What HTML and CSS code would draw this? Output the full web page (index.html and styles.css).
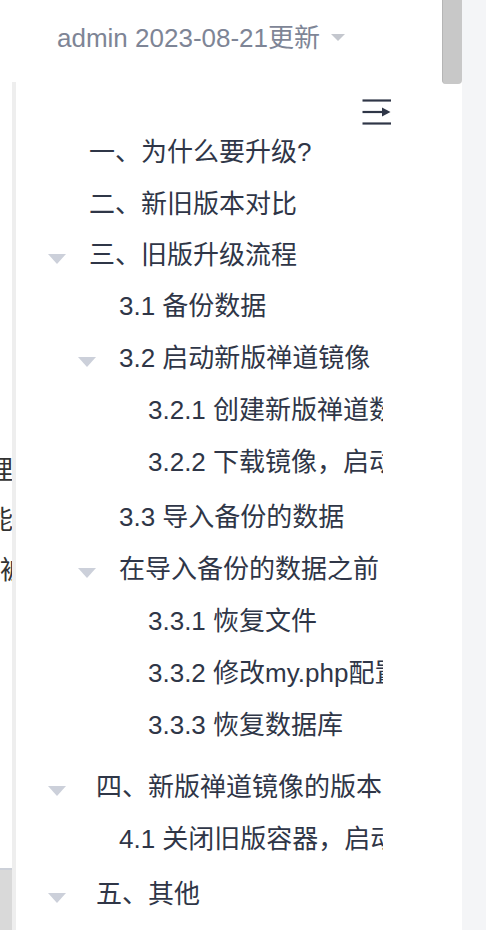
FILE: index.html
```html
<!DOCTYPE html>
<html lang="zh-CN">
<head>
<meta charset="utf-8">
<title>目录</title>
<link rel="stylesheet" href="styles.css">
</head>
<body>
<div class="window">
  <div class="main">
    <header class="meta"><span class="meta-text">admin 2023-08-21更新</span><span class="meta-caret"></span></header>
    <div class="body-row">
      <div class="page-col">
        <div class="page-line shift">理</div>
        <div class="page-line shift">能</div>
        <div class="page-line">被</div>
        <div class="page-block"></div>
      </div>
      <aside class="toc">
        <div class="toc-head">
          <svg class="toc-icon" width="30" height="26" viewBox="0 0 30 26">
            <line x1="0.5" y1="1.5" x2="29" y2="1.5"/>
            <line x1="0.5" y1="13" x2="22" y2="13"/>
            <path class="head" d="M20 8.5 L28.5 13 L20 17.5 Z"/>
            <line x1="0.5" y1="24.5" x2="29" y2="24.5"/>
          </svg>
        </div>
        <ul class="toc-list">
          <li class="row l1"><span class="slot"></span><span class="label">一、为什么要升级?</span></li>
          <li class="row l1"><span class="slot"></span><span class="label">二、新旧版本对比</span></li>
          <li class="row l1 tight"><span class="slot"><span class="caret"></span></span><span class="label">三、旧版升级流程</span></li>
          <li class="row l2"><span class="slot"></span><span class="label">3.1 备份数据</span></li>
          <li class="row l2"><span class="slot"><span class="caret"></span></span><span class="label">3.2 启动新版禅道镜像</span></li>
          <li class="row l3"><span class="slot"></span><span class="label">3.2.1 创建新版禅道数据目录</span></li>
          <li class="row l3"><span class="slot"></span><span class="label">3.2.2 下载镜像，启动容器</span></li>
          <li class="row l2 gap-s"><span class="slot"></span><span class="label">3.3 导入备份的数据</span></li>
          <li class="row l2"><span class="slot"><span class="caret"></span></span><span class="label">在导入备份的数据之前</span></li>
          <li class="row l3"><span class="slot"></span><span class="label">3.3.1 恢复文件</span></li>
          <li class="row l3"><span class="slot"></span><span class="label">3.3.2 修改my.php配置文件</span></li>
          <li class="row l3"><span class="slot"></span><span class="label">3.3.3 恢复数据库</span></li>
          <li class="row l1 wide gap-l"><span class="slot"><span class="caret"></span></span><span class="label">四、新版禅道镜像的版本</span></li>
          <li class="row l2"><span class="slot"></span><span class="label">4.1 关闭旧版容器，启动新版容器</span></li>
          <li class="row l1 wide gap-xs"><span class="slot"><span class="caret"></span></span><span class="label">五、其他</span></li>
          <li class="row l2"><span class="slot"></span><span class="label">5.1 常见问题处理</span></li>
        </ul>
      </aside>
    </div>
    <div class="thumb"></div>
  </div>
  <div class="gutter"></div>
</div>
</body>
</html>
```

FILE: styles.css
```css
html, body {
  margin: 0;
  height: 100%;
  overflow: hidden;
  background: #ffffff;
}

.window {
  display: flex;
  height: 930px;
}

.main {
  position: relative;
  width: 462px;
  flex: none;
  display: flex;
  flex-direction: column;
}

.gutter {
  flex: 1;
  background: #f4f5f7;
}

.meta {
  height: 82px;
  box-sizing: border-box;
  padding: 23px 0 0 57px;
  display: flex;
  align-items: flex-start;
  font: 26px/30px "Liberation Sans", "Noto Sans CJK SC", sans-serif;
  color: #7e8596;
  white-space: nowrap;
}

.meta-caret {
  width: 0;
  height: 0;
  margin: 11px 0 0 11px;
  border-left: 7.5px solid transparent;
  border-right: 7.5px solid transparent;
  border-top: 7px solid #c4c7ce;
}

.body-row {
  flex: 1;
  min-height: 0;
  display: flex;
}

.page-col {
  width: 12px;
  flex: none;
  overflow: hidden;
  padding-top: 364px;
  font: 26px/50px "Liberation Serif", "Noto Sans CJK SC", serif;
  color: #333333;
  white-space: nowrap;
}

.page-line.shift {
  margin-left: -13px;
}

.page-block {
  margin-top: 272px;
  height: 80px;
  background: #d9d9d9;
  border-top: 2px solid #ccd0d8;
}

.toc {
  flex: 1;
  min-width: 0;
  border-left: 4px solid #eeeeee;
  background: #ffffff;
}

.toc-head {
  height: 41px;
  box-sizing: border-box;
  padding: 17px 0 0 346px;
  display: flex;
  align-items: flex-start;
}

.toc-icon {
  display: block;
  flex: none;
}

.toc-icon line {
  stroke: #2f3647;
  stroke-width: 2.2;
}

.toc-icon .head {
  fill: #2f3647;
}

.toc-list {
  list-style: none;
  margin: 0;
  padding: 0;
  width: 367px;
  overflow: hidden;
  font-family: "Liberation Sans", "Noto Sans CJK SC", sans-serif;
  font-size: 26px;
  color: #2f3647;
}

.row {
  display: flex;
  align-items: center;
  height: 52px;
  white-space: nowrap;
}

.l1 { padding-left: 32px; }
.l2 { padding-left: 62px; }
.l3 { padding-left: 91px; }

.slot {
  flex: none;
  width: 41px;
  display: flex;
  align-items: center;
}

.wide .slot {
  width: 48px;
}

.label {
  flex: none;
}

.caret {
  width: 0;
  height: 0;
  margin-top: 14px;
  border-left: 9.5px solid transparent;
  border-right: 9.5px solid transparent;
  border-top: 10px solid #ccd0da;
}

.tight { height: 50px; }
.gap-s { margin-top: 3px; }
.gap-l { margin-top: 10px; }
.gap-xs { margin-top: 3px; }

.thumb {
  position: absolute;
  top: 0;
  right: 0;
  width: 19px;
  height: 84px;
  background: #c8c8c8;
  border-left: 1px solid #b5b5b5;
  border-radius: 0 0 4px 4px;
}
```
